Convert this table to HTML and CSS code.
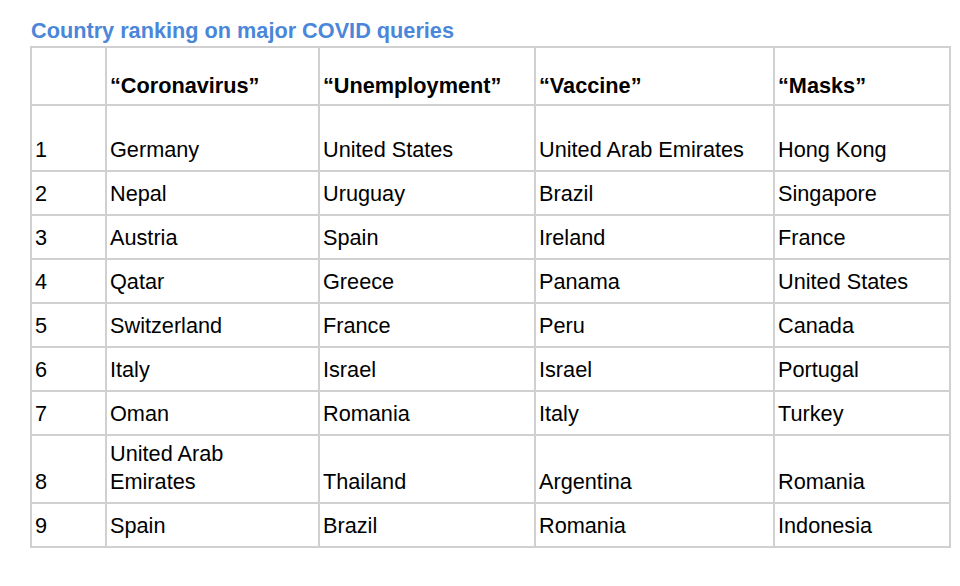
FILE: index.html
```html
<!DOCTYPE html>
<html>
<head>
<meta charset="utf-8">
<link rel="stylesheet" href="styles.css">
</head>
<body>
<h1 class="title">Country ranking on major COVID queries</h1>
<table class="rank">
<colgroup>
<col class="c0"><col class="c1"><col class="c2"><col class="c3"><col class="c4">
</colgroup>
<thead>
<tr class="r-head"><th></th><th>“Coronavirus”</th><th>“Unemployment”</th><th>“Vaccine”</th><th>“Masks”</th></tr>
</thead>
<tbody>
<tr class="r-first"><td>1</td><td>Germany</td><td>United States</td><td>United Arab Emirates</td><td>Hong Kong</td></tr>
<tr class="r"><td>2</td><td>Nepal</td><td>Uruguay</td><td>Brazil</td><td>Singapore</td></tr>
<tr class="r"><td>3</td><td>Austria</td><td>Spain</td><td>Ireland</td><td>France</td></tr>
<tr class="r"><td>4</td><td>Qatar</td><td>Greece</td><td>Panama</td><td>United States</td></tr>
<tr class="r"><td>5</td><td>Switzerland</td><td>France</td><td>Peru</td><td>Canada</td></tr>
<tr class="r"><td>6</td><td>Italy</td><td>Israel</td><td>Israel</td><td>Portugal</td></tr>
<tr class="r"><td>7</td><td>Oman</td><td>Romania</td><td>Italy</td><td>Turkey</td></tr>
<tr class="r-two"><td>8</td><td>United Arab<br>Emirates</td><td>Thailand</td><td>Argentina</td><td>Romania</td></tr>
<tr class="r"><td>9</td><td>Spain</td><td>Brazil</td><td>Romania</td><td>Indonesia</td></tr>
</tbody>
</table>
</body>
</html>
```
FILE: styles.css
```css
html, body {
  margin: 0;
  padding: 0;
  background: #ffffff;
}
body {
  font-family: "Liberation Sans", Arial, sans-serif;
  font-size: 21.7px;
  color: #000000;
}
.title {
  margin: 0;
  padding: 17px 0 0 31px;
  height: 28px;
  font-size: 21.7px;
  line-height: 28px;
  font-weight: bold;
  color: #4a86d9;
}
.rank {
  margin: 1px 0 0 30px;
  border-collapse: collapse;
  table-layout: fixed;
  width: 919px;
}
.c0 { width: 75px; }
.c1 { width: 213px; }
.c2 { width: 216px; }
.c3 { width: 239px; }
.c4 { width: 176px; }
.rank th, .rank td {
  border: 2px solid #d0d0d0;
  padding: 0 4px 6px 3px;
  text-align: left;
  vertical-align: bottom;
  line-height: 28px;
  font-size: 21.7px;
  white-space: nowrap;
}
.rank th {
  font-weight: bold;
  padding-bottom: 4px;
}
.r-head { height: 58px; }
.r-first { height: 66px; }
.r { height: 44px; }
.r-two { height: 68px; }
```
